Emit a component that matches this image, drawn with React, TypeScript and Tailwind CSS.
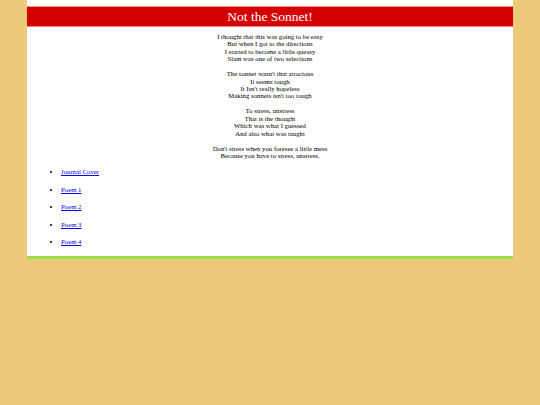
import React from 'react';

const stanzas: string[][] = [
  [
    'I thought that this was going to be easy',
    'But when I got to the directions',
    'I started to become a little queasy',
    'Slam was one of two selections',
  ],
  [
    "The sonnet wasn't that atrocious",
    'It seems tough',
    "It Isn't really hopeless",
    "Making sonnets isn't too rough",
  ],
  ['To stress, unstress', 'That is the thought', 'Which was what I guessed', 'And also what was taught'],
  ["Don't stress when you foresee a little mess", 'Because you have to stress, unstress.'],
];

const links = ['Journal Cover', 'Poem 1', 'Poem 2', 'Poem 3', 'Poem 4'];

const App = () => {
  return (
    <div className="min-h-[405px] bg-[#ecc97b] font-['Liberation_Serif','Times_New_Roman',serif] text-black">
      <div className="mx-[27px] bg-white pt-[6px]">
        <h1 className="border-y border-[#f08a8a] bg-[#d40000] text-center text-[13.5px] leading-[19px] text-white">
          Not the Sonnet!
        </h1>

        <div className="pt-[6px] text-center text-[6.75px] leading-[7.4px]">
          {stanzas.map((lines, i) => (
            <p key={i} className="mb-[7.6px]">
              {lines.map((line, j) => (
                <React.Fragment key={j}>
                  {line}
                  {j < lines.length - 1 && <br />}
                </React.Fragment>
              ))}
            </p>
          ))}
        </div>

        <ul className="list-disc pl-[34px] pt-[1px] pb-[10px] text-[6.75px] leading-[7.4px]">
          {links.map((label) => (
            <li key={label} className="mb-[10.2px] last:mb-0">
              <a href="#" className="text-[#0000ee] underline">
                {label}
              </a>
            </li>
          ))}
        </ul>

        <div className="h-[3px] bg-[#9be04a]" />
      </div>
    </div>
  );
};

export default App;
